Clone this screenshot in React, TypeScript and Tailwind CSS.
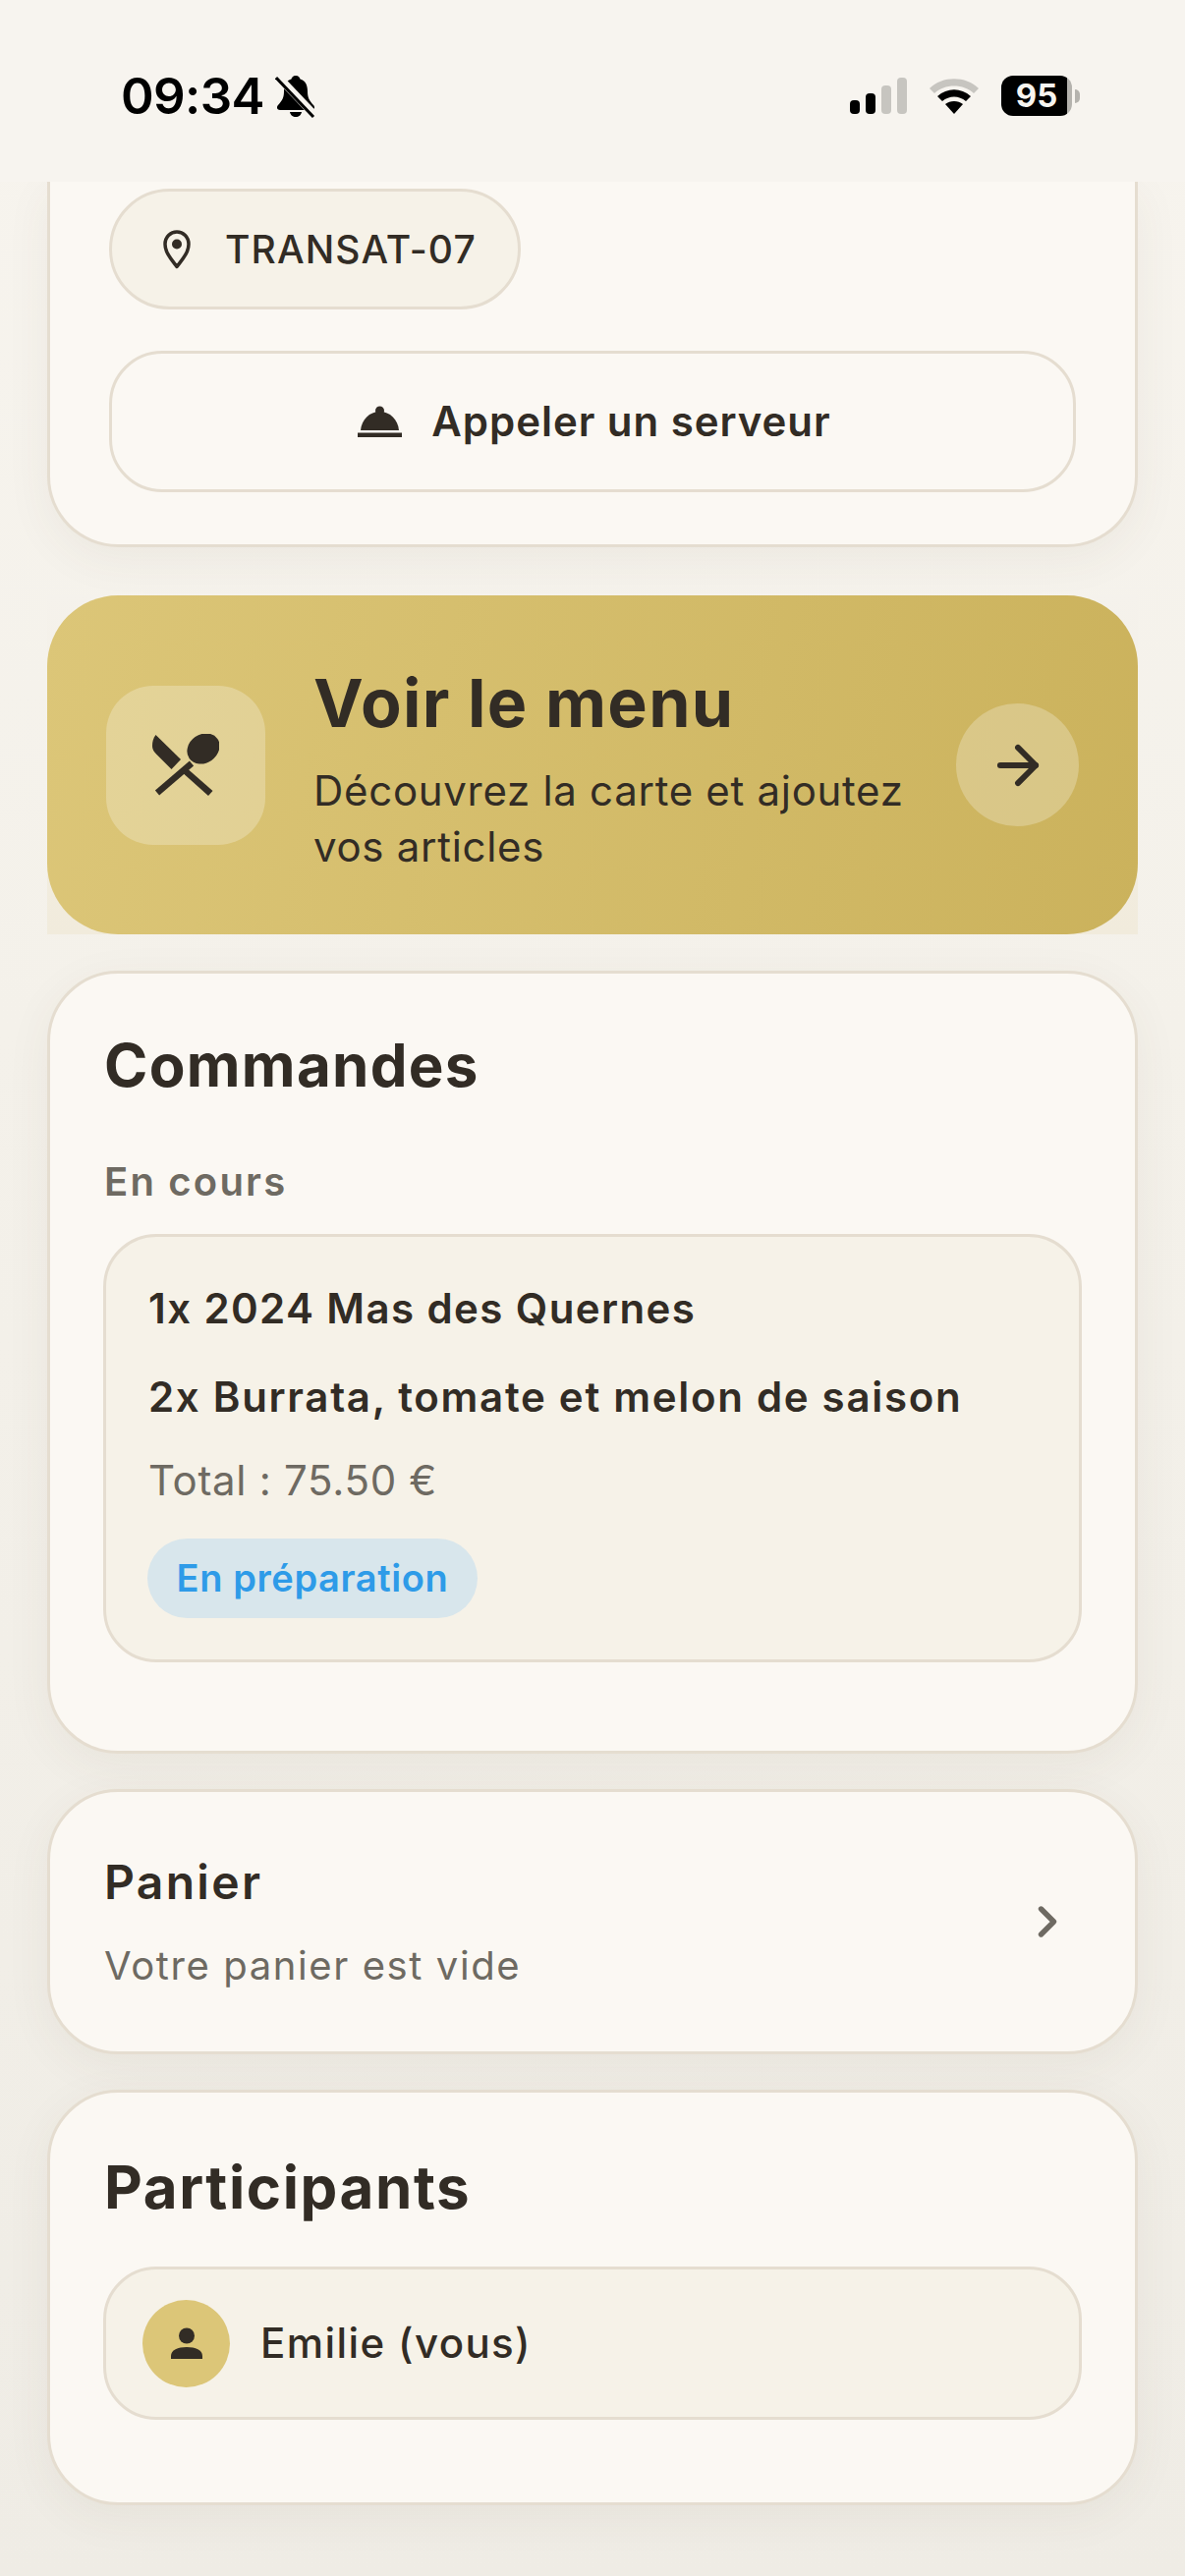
import { ArrowRight, ChevronRight } from "lucide-react";

function StatusBar() {
  return (
    <div className="relative z-10 flex h-[185px] shrink-0 items-start justify-between bg-[#f7f4ef] pl-[123px] pr-[107px] pt-[72px]">
      <div className="flex items-center gap-[11px]">
        <span className="text-[51px] font-semibold leading-[52px] tracking-[-0.6px] text-black">09:34</span>
        <svg width="42" height="44" viewBox="0 0 42 44">
          <path d="M21 1c3 0 4 2 4.500 3.500C31 6 33 11 33 17c0 6 1.500 9 6 14 2 2 1 5-2 5H5c-3 0-4-3-2-5 4.500-5 6-8 6-14 0-6 2-11 7.500-12.500C17 3 18 1 21 1z" fill="#000" />
          <path d="M15 38h12c-.5 3-3 5-6 5s-5.500-2-6-5z" fill="#000" />
          <path d="M2 1l38 40" stroke="#f7f4ef" strokeWidth="8" />
          <path d="M1 3l38 40" stroke="#000" strokeWidth="3" />
        </svg>
      </div>
      <div className="flex items-center gap-[22px] pt-[5px]">
        <div className="flex h-[37px] items-end gap-[6px]">
          <div className="h-[14px] w-[10px] rounded-[4px] bg-black" />
          <div className="h-[21px] w-[10px] rounded-[4px] bg-black" />
          <div className="h-[29px] w-[10px] rounded-[4px] bg-[#c7c5c0]" />
          <div className="h-[37px] w-[10px] rounded-[4px] bg-[#c7c5c0]" />
        </div>
        <svg width="52" height="38" viewBox="0 0 52 38">
          <path d="M1 11C14-2 38-2 51 11l-5 5C36 6 16 6 6 16z" fill="#c7c5c0" />
          <path d="M9 19c10-9 24-9 34 0l-5 5c-7-6-17-6-24 0z" fill="#000" />
          <path d="M17 27c5-4 13-4 18 0l-9 10z" fill="#000" />
        </svg>
        <div className="flex items-center gap-[3px]">
          <div className="flex h-[41px] w-[72px] items-center justify-center rounded-[12px] bg-[linear-gradient(90deg,#000_93%,#b5b3ae_93%)]">
            <span className="text-[33px] font-bold leading-none text-[#f7f4ef]">95</span>
          </div>
          <div className="h-[14px] w-[5px] rounded-r-[5px] bg-[#b5b3ae]" />
        </div>
      </div>
    </div>
  );
}

function PinIcon() {
  return (
    <svg width="28" height="40" viewBox="0 0 28 40" fill="none">
      <path d="M14 37.500C8 29.500 2 23 2 14.500 2 7 7.500 2 14 2s12 5 12 12.500C26 23 20 29.500 14 37.500z" stroke="#322c25" strokeWidth="3.500" strokeLinejoin="round" />
      <circle cx="14" cy="14.500" r="5" fill="#322c25" />
    </svg>
  );
}

function BellIcon() {
  return (
    <svg width="45" height="32" viewBox="0 0 45 32" fill="#322c25">
      <circle cx="22.500" cy="5" r="4.500" />
      <path d="M3 25C4 14 12 6 22.500 6S41 14 42 25z" />
      <rect x="0" y="27.500" width="45" height="4.500" />
    </svg>
  );
}

function CutleryIcon() {
  return (
    <svg width="68" height="63" viewBox="0 0 68 63" fill="#322c25">
      <path d="M3.500 1L29 26 19.500 36 4 20.500C1 17.500 0 15 0 12c0-4 1-8 3.500-11z" />
      <path d="M33 33l-4.500 4.500 28.500 25.500 4.500-5z" />
      <ellipse cx="52" cy="15" rx="17.500" ry="14.500" transform="rotate(-35 52 15)" />
      <path d="M40 30L5 60" stroke="#322c25" strokeWidth="6.500" />
    </svg>
  );
}

function UserIcon() {
  return (
    <svg width="32" height="32" viewBox="0 0 32 32" fill="#322c25">
      <circle cx="16" cy="8.500" r="8" />
      <path d="M0 32v-3c0-6 7-9 16-9s16 3 16 9v3z" />
    </svg>
  );
}

export default function App() {
  return (
    <div className="flex h-[2622px] w-[1206px] flex-col overflow-hidden bg-[linear-gradient(180deg,#f7f4ee_0%,#f4f1ea_40%,#efece5_100%)] font-['Inter',sans-serif] text-[#322c25]">
      <StatusBar />
      <div className="flex flex-col px-[48px]">
        {/* haut de la carte, coupé par la barre */}
        <div className="flex flex-col gap-[42px] rounded-b-[72px] border-x-[3px] border-b-[3px] border-[#e5ddd0] bg-[#fbf8f3] pb-[53px] pl-[60px] pr-[60px] pt-[7px] shadow-[0_12px_48px_rgba(80,70,50,0.06)]">
          <div className="flex h-[123px] w-[419px] items-center gap-[35px] rounded-full border-[3px] border-[#e5ddd0] bg-[#f6f2e8] pl-[52px]">
            <PinIcon />
            <span className="text-[39px] font-medium leading-none tracking-[1.1px]">TRANSAT-07</span>
          </div>
          <div className="flex h-[144px] items-center justify-center gap-[30px] rounded-[54px] border-[3px] border-[#e5ddd0] bg-[#fbf8f3] pl-[4px]">
            <BellIcon />
            <span className="text-[42px] font-semibold leading-none tracking-[0.95px]">Appeler un serveur</span>
          </div>
        </div>

        <div className="mt-[49px] bg-[linear-gradient(180deg,#f5f2ec,#f1ebdc)]">
          <div className="flex h-[345px] items-center rounded-[72px] bg-[linear-gradient(100deg,#dcc678,#cbb25c)] pl-[60px] pr-[60px]">
            <div className="flex h-[162px] w-[162px] shrink-0 items-center justify-center rounded-[48px] bg-[rgba(255,255,255,0.25)]">
              <CutleryIcon />
            </div>
            <div className="ml-[49px] flex-1 pt-[7px]">
              <div className="text-[68px] font-bold leading-[80px] tracking-[1.3px]">Voir le menu</div>
              <div className="mt-[21px] w-[640px] text-[42px] leading-[57px] tracking-[0.7px]">Découvrez la carte et ajoutez vos articles</div>
            </div>
            <div className="flex h-[125px] w-[125px] shrink-0 items-center justify-center rounded-full bg-[rgba(255,255,255,0.25)]">
              <ArrowRight size={62} strokeWidth={2.3} color="#322c25" />
            </div>
          </div>
        </div>

        <div className="mt-[37px] flex h-[797px] flex-col rounded-[72px] border-[3px] border-[#e5ddd0] bg-[#fbf8f3] pl-[55px] pr-[55px] pt-[53px] shadow-[0_12px_48px_rgba(80,70,50,0.06)]">
          <div className="text-[60px] font-bold leading-[80px] tracking-[1.3px]">Commandes</div>
          <div className="mt-[55px] text-[40px] font-semibold leading-[48px] tracking-[2.2px] text-[#6e6a62]">En cours</div>
          <div className="-mx-[1px] mt-[29px] h-[436px] rounded-[54px] border-[3px] border-[#e5ddd0] bg-[#f6f2e8] pl-[43px] pt-[43px]">
            <div className="text-[42px] font-semibold leading-[60px] tracking-[1.4px]">1x 2024 Mas des Quernes</div>
            <div className="mt-[30px] text-[42px] font-semibold leading-[60px] tracking-[1.7px]">2x Burrata, tomate et melon de saison</div>
            <div className="mt-[25px] text-[42px] leading-[60px] tracking-[0.7px] text-[#6e6a62]">Total : 75.50 €</div>
            <div className="mt-[29px] -ml-[1px] flex h-[81px] w-[336px] items-center justify-center rounded-full bg-[#d8e6ec] text-[38px] font-semibold tracking-[0.6px] text-[#2e9be8]">En préparation</div>
          </div>
        </div>

        <div className="mt-[36px] flex h-[270px] items-center justify-between rounded-[72px] border-[3px] border-[#e5ddd0] bg-[#fbf8f3] pl-[55px] pr-[63px] shadow-[0_12px_48px_rgba(80,70,50,0.06)]">
          <div>
            <div className="text-[48px] font-semibold leading-[60px] tracking-[2.3px]">Panier</div>
            <div className="mt-[30px] text-[40px] leading-[50px] tracking-[1.6px] text-[#6e6a62]">Votre panier est vide</div>
          </div>
          <ChevronRight size={52} strokeWidth={2.5} color="#6e6a62" />
        </div>

        <div className="mt-[36px] flex h-[423px] flex-col rounded-[72px] border-[3px] border-[#e5ddd0] bg-[#fbf8f3] pl-[55px] pr-[55px] pt-[56px] shadow-[0_12px_48px_rgba(80,70,50,0.06)]">
          <div className="text-[60px] font-bold leading-[80px] tracking-[1.6px]">Participants</div>
          <div className="-mx-[1px] mt-[41px] flex h-[156px] items-center gap-[31px] rounded-[54px] border-[3px] border-[#e5ddd0] bg-[#f6f2e8] pl-[37px]">
            <div className="flex h-[89px] w-[89px] items-center justify-center rounded-full bg-[#dcc678]">
              <UserIcon />
            </div>
            <span className="text-[42px] font-medium leading-none tracking-[1.4px]">Emilie (vous)</span>
          </div>
        </div>
      </div>
    </div>
  );
}
